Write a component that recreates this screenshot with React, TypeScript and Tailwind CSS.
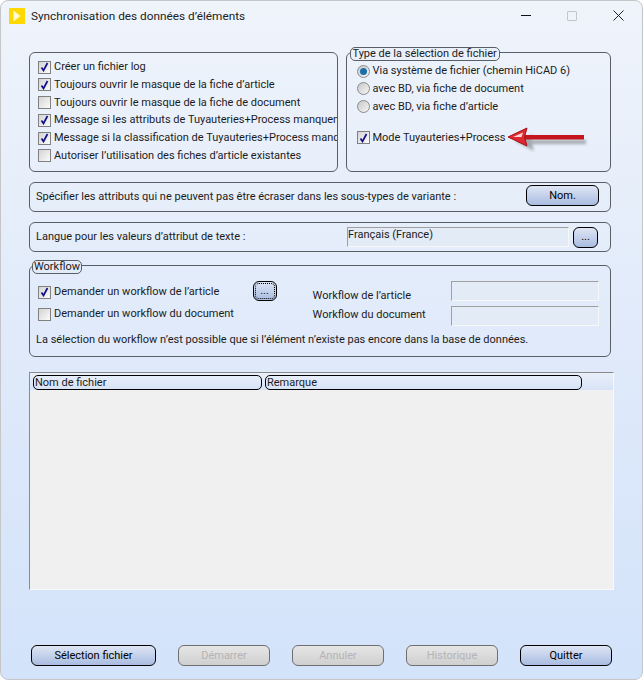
import React from 'react';

const buttonOn =
  'flex items-center justify-center h-[21px] rounded-[6px] border border-black bg-gradient-to-b from-[#dfe6f5] to-[#a9bce0] text-black';
const buttonOff =
  'flex items-center justify-center h-[21px] rounded-[6px] border border-[#6f6f6f] bg-gradient-to-b from-[#e6e6e6] to-[#cfcfcf] text-[#b4b4b4]';
const group = 'rounded-[6px] border border-[#5a5f66]';
const sunken = 'border border-[#f7f7f7] border-t-[#a0a0a0] border-l-[#a0a0a0] bg-[#e3ebf6]';

function Check({ on, label, className = 'gap-[3px]' }: { on?: boolean; label: string; className?: string }) {
  return (
    <div className={`flex items-center whitespace-nowrap ${className}`}>
      <span className="flex h-[13px] w-[13px] shrink-0 items-center justify-center border border-[#808080] bg-gradient-to-br from-[#d4d4d4] to-[#fbfbfb]">
        {on && (
          <svg width="9" height="10" viewBox="0 0 9 10">
            <path d="M1.5 5.5 L3.5 8.5 L7.5 1" fill="none" stroke="#10108c" strokeWidth="1.7" />
          </svg>
        )}
      </span>
      <span>{label}</span>
    </div>
  );
}

function Radio({ on, label }: { on?: boolean; label: string }) {
  return (
    <div className="flex items-center gap-[2px] whitespace-nowrap">
      <span className="flex h-[13px] w-[13px] shrink-0 items-center justify-center rounded-full border border-[#8a8a8a] bg-gradient-to-br from-[#c8c8c8] to-[#f6f6f6]">
        {on && <span className="h-[7px] w-[7px] rounded-full bg-[#1b6fa8]" />}
      </span>
      <span>{label}</span>
    </div>
  );
}

export default function App() {
  return (
    <div
      className="relative flex h-[680px] w-[643px] flex-col overflow-hidden rounded-[8px] border border-[#c4c6ca] bg-gradient-to-b from-[#eff4fb] via-[#e0eafa] to-[#d3e3fa] text-[11px] leading-[16px] text-[#1c1c1c]"
      style={{ fontFamily: 'Roboto, Tahoma, sans-serif' }}
    >
      {/* Title bar */}
      <div className="flex h-[29px] shrink-0 items-center pl-[8px] pr-[18px]">
        <span className="flex h-[16px] w-[16px] items-center justify-center bg-[#ffd800]">
          <svg width="8" height="12" viewBox="0 0 8 12">
            <path d="M0.5 0.5 L7.5 6 L0.5 11.5 Z" fill="#fff8d0" />
          </svg>
        </span>
        <span className="ml-[6px] text-[11.8px] text-[#222]">Synchronisation des données d’éléments</span>
        <div className="ml-auto flex items-center gap-[36px]">
          <span className="h-px w-[10px] bg-[#111]" />
          <span className="h-[10px] w-[10px] rounded-[1px] border border-[#c3c5c9]" />
          <svg width="11" height="11" viewBox="0 0 11 11">
            <path d="M0.5 0.5 L10.5 10.5 M10.5 0.5 L0.5 10.5" stroke="#222" strokeWidth="1" />
          </svg>
        </div>
      </div>

      <div className="flex flex-1 flex-col pl-[28px] pr-[31px]">
        {/* Options */}
        <div className="mt-[22px] flex gap-[8px]">
          <div className={`${group} h-[120px] w-[310px] overflow-hidden pl-[8px] pt-[6px]`}>
            <div className="flex flex-col gap-[1.8px]">
              <Check on label="Créer un fichier log" />
              <Check on label="Toujours ouvrir le masque de la fiche d’article" />
              <Check label="Toujours ouvrir le masque de la fiche de document" />
              <Check on label="Message si les attributs de Tuyauteries+Process manquent" />
              <Check on label="Message si la classification de Tuyauteries+Process manque" />
              <Check label="Autoriser l’utilisation des fiches d’article existantes" />
            </div>
          </div>
          <div className={`${group} relative h-[120px] w-[265px] pl-[10px] pt-[10px]`}>
            <span className="absolute -top-[6px] left-[3px] rounded-[5px] border border-[#5a5f66] bg-[#e9f0fa] pl-[1px] pr-[2px] leading-[12px]">
              Type de la sélection de fichier
            </span>
            <div className="flex flex-col gap-[1.8px]">
              <Radio on label="Via système de fichier (chemin HiCAD 6)" />
              <Radio label="avec BD, via fiche de document" />
              <Radio label="avec BD, via fiche d’article" />
            </div>
            <Check on label="Mode Tuyauteries+Process" className="mt-[15px] gap-[2px]" />
            <svg className="absolute left-[160px] top-[73px]" width="84" height="30" viewBox="0 0 84 30">
              <defs>
                <filter id="arrowShadow" x="-10%" y="-50%" width="120%" height="200%">
                  <feGaussianBlur stdDeviation="1.4" />
                </filter>
              </defs>
              <path d="M8 15 L26 9 L24 14 L79 14 L79 18 L25 18 L27 25 Z" fill="#404040" opacity="0.4" filter="url(#arrowShadow)" />
              <path d="M18 9 L77 9 L77 13.5 L18 13.5 Z" fill="#c4161c" />
              <path d="M1 11 L20 2 L17.5 11 L20 20 Z" fill="#dc2a30" stroke="#a80f16" strokeWidth="1" />
              <path d="M6 11 L16 6.5 L14.5 11 Z" fill="#ffd4d4" />
            </svg>
          </div>
        </div>

        {/* Attributes */}
        <div className={`${group} mt-[10px] flex h-[30px] items-center justify-between pl-[6px] pr-[11px]`}>
          <span>Spécifier les attributs qui ne peuvent pas être écraser dans les sous-types de variante :</span>
          <button className={`${buttonOn} -mt-[3px] w-[73px]`}>Nom.</button>
        </div>

        {/* Language */}
        <div className={`${group} mt-[10px] flex h-[30px] items-center pl-[6px] pr-[12px]`}>
          <span>Langue pour les valeurs d’attribut de texte :</span>
          <div className={`${sunken} ml-auto h-[20px] w-[222px] leading-[14px]`}>Français (France)</div>
          <button className={`${buttonOn} ml-[4px] h-[20px] w-[25px]`}>...</button>
        </div>

        {/* Workflow */}
        <div className={`${group} relative mt-[13px] h-[92px] pl-[8px] pr-[11px] pt-[15px]`}>
          <span className="absolute -top-[6px] left-[2px] rounded-[5px] border border-[#5a5f66] bg-[#e2ebf9] px-[1px] leading-[12px]">
            Workflow
          </span>
          <div className="flex">
            <div className="flex w-[215px] flex-col gap-[6px] pt-[3px]">
              <Check on label="Demander un workflow de l’article" />
              <Check label="Demander un workflow du document" />
            </div>
            <button className="flex h-[20px] w-[24px] items-center justify-center rounded-[6px] border border-black bg-gradient-to-b from-[#dfe6f5] to-[#a9bce0] outline-1 -outline-offset-3 outline-dotted outline-black">
              ...
            </button>
            <div className="ml-[36px] flex w-[139px] flex-col gap-[3px] pt-[7px]">
              <span>Workflow de l’article</span>
              <span>Workflow du document</span>
            </div>
            <div className="flex w-[148px] flex-col gap-[5px]">
              <div className={`${sunken} h-[20px]`} />
              <div className={`${sunken} h-[20px]`} />
            </div>
          </div>
          <p className="mt-[6px] -ml-[2px] whitespace-nowrap">
            La sélection du workflow n’est possible que si l’élément n’existe pas encore dans la base de données.
          </p>
        </div>

        {/* File list */}
        <div className="mt-[15px] h-[218px] w-[585px] border border-[#f9f9f9] border-l-[#8a8a8a] border-t-[#8a8a8a] bg-[#f0f0f0]">
          <div className="flex h-[17px] items-start gap-[3px] bg-gradient-to-b from-[#eaf0fa] to-[#d6e3f6] pl-[3px] pt-[2px]">
            <div className="h-[15px] w-[229px] rounded-[5px] border border-black pl-[1px] leading-[14px]">Nom de fichier</div>
            <div className="h-[15px] w-[317px] rounded-[5px] border border-black pl-[1px] leading-[14px]">Remarque</div>
          </div>
        </div>

        {/* Actions */}
        <div className="-mr-[1px] mb-[13px] mt-auto flex justify-between pl-[2px]">
          <button className={`${buttonOn} w-[125px]`}>Sélection fichier</button>
          <button className={`${buttonOff} w-[92px]`} disabled>Démarrer</button>
          <button className={`${buttonOff} w-[92px]`} disabled>Annuler</button>
          <button className={`${buttonOff} w-[92px]`} disabled>Historique</button>
          <button className={`${buttonOn} w-[92px]`}>Quitter</button>
        </div>
      </div>
    </div>
  );
}
